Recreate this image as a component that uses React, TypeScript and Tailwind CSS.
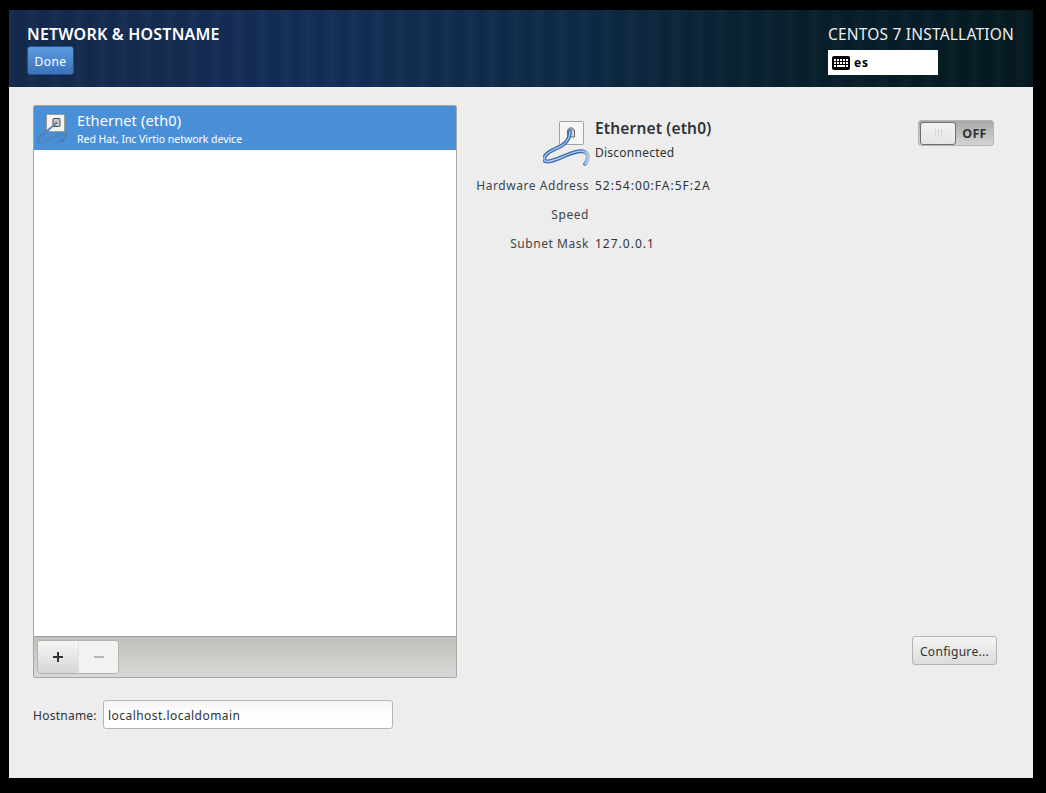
const font = "font-['Noto_Sans','Open_Sans',sans-serif]"

const smallCable = 'M22 11 C18 16 10 21 5 26 C2 29 2 32 6 31 C12 30 22 24 29 23 C32 23 32 26 29 28 C27 30 24 31 22 32'
const bigCable = 'M27 11 C27 20 22 25 12 29 C3 33 -1 38 2 41 C6 43 14 39 24 35 C31 32 38 30 42 32 C46 34 46 39 42 44'

function CableIcon({ small = false }: { small?: boolean }) {
  if (small) {
    return (
      <svg width="34" height="34" viewBox="0 0 34 34" className="shrink-0">
        <rect x="11.5" y="3.5" width="18" height="17" fill="#f4f4f2" stroke="#9a9a96" />
        <rect x="18" y="7.5" width="7" height="8" rx="1" fill="#c9c9c6" stroke="#4a4a4a" />
        <path d={smallCable} fill="none" stroke="#2f5f9f" strokeWidth="1.8" />
        <path d={smallCable} fill="none" stroke="#9dbce4" strokeWidth="0.7" />
      </svg>
    )
  }
  return (
    <svg width="48" height="48" viewBox="0 0 48 48" className="shrink-0">
      <defs>
        <linearGradient id="cableFade" x1="0" y1="0" x2="48" y2="0" gradientUnits="userSpaceOnUse">
          <stop offset="0.8" stopColor="#3a6db3" />
          <stop offset="1" stopColor="#3a6db3" stopOpacity="0.15" />
        </linearGradient>
      </defs>
      <rect x="16.5" y="1.5" width="24" height="23" rx="1" fill="#f6f6f5" stroke="#a2a2a0" />
      <path d="M24.5 17 V10 L26 10 V8 H30 V10 L31.5 10 V17 Z" fill="#d8d8d6" stroke="#6a6a68" />
      <path d={bigCable} fill="none" stroke="url(#cableFade)" strokeWidth="4" strokeLinecap="round" />
      <path d={bigCable} fill="none" stroke="#b4d0f0" strokeWidth="1.3" strokeLinecap="round" />
    </svg>
  )
}

function KeyboardIcon() {
  return (
    <svg width="18" height="14" viewBox="0 0 18 14" className="shrink-0">
      <rect width="18" height="14" rx="2" fill="#000" />
      <path d="M2 3h2v2H2zM5 3h2v2H5zM8 3h2v2H8zM11 3h2v2h-2zM14 3h2v2h-2zM2 6h2v2H2zM5 6h2v2H5zM8 6h2v2H8zM11 6h2v2h-2zM14 6h2v2h-2zM2 9h2v2H2zM5 9h8v2H5zM14 9h2v2h-2z" fill="#fff" />
    </svg>
  )
}

const details = [
  { label: 'Hardware Address', value: '52:54:00:FA:5F:2A' },
  { label: 'Speed', value: '' },
  { label: 'Subnet Mask', value: '127.0.0.1' },
]

export default function App() {
  return (
    <div className={`h-[793px] w-[1046px] overflow-hidden bg-black pl-[9px] pt-[10px] ${font}`}>
      <div className="flex h-[768px] w-[1024px] flex-col bg-[#ededed] text-[#2e3436]">
        <header className="flex h-[77px] shrink-0 justify-between bg-[repeating-linear-gradient(90deg,rgba(255,255,255,0.025)_0px,rgba(255,255,255,0)_7px,rgba(0,0,0,0.05)_13px,rgba(255,255,255,0.02)_23px),linear-gradient(90deg,#14294c_0%,#142e57_30%,#0e2a47_55%,#08202e_75%,#051920_100%)] pl-[18px] pr-[19px]">
          <div className="flex flex-col items-start pt-[15px]">
            <h1 className="text-[16px] font-semibold leading-[18px] tracking-[0.2px] text-white">NETWORK &amp; HOSTNAME</h1>
            <button className="mt-[3px] flex h-[29px] w-[47px] items-center justify-center rounded-[3px] border border-[#24508f] bg-gradient-to-b from-[#5c9be0] to-[#3a73bb] pt-[2px] text-[12px] tracking-[0.4px] text-white">
              Done
            </button>
          </div>
          <div className="flex flex-col items-start pt-[15px]">
            <div className="text-[15.5px] leading-[18px] tracking-[0.2px] text-[#eeeeee]">CENTOS 7 INSTALLATION</div>
            <div className="mt-[7px] flex h-[25px] w-[110px] items-center gap-[4px] bg-white pl-[4px] text-[12px] font-bold tracking-[0.8px] text-black">
              <KeyboardIcon />
              es
            </div>
          </div>
        </header>

        <main className="flex min-h-0 flex-1 pl-[24px] pr-[36px] pt-[18px]">
          <div className="flex w-[424px] shrink-0 flex-col">
            <div className="flex h-[573px] flex-col overflow-hidden rounded-[2px] border border-[#a6a6a3] bg-white">
              <div className="flex h-[44px] shrink-0 items-center gap-[7px] bg-[#4a90d9] pl-[1px] text-white">
                <CableIcon small />
                <div className="pl-[1px] pt-[2px]">
                  <div className="text-[14.5px] leading-[18px] tracking-[0.15px]">Ethernet (eth0)</div>
                  <div className="mt-[3px] text-[10.5px] leading-[15px] tracking-[-0.03px]">Red Hat, Inc Virtio network device</div>
                </div>
              </div>
              <div className="flex-1 bg-white" />
              <div className="flex h-[41px] shrink-0 items-center border-t border-[#9b9b98] bg-gradient-to-b from-[#c0c0bc] to-[#d8d9d6] pl-[3px]">
                <div className="flex h-[34px] w-[82px] overflow-hidden rounded-[4px] border border-[#b3b3b0]">
                  <button className="flex w-[40px] items-center justify-center bg-gradient-to-b from-[#f6f6f5] to-[#d6d6d4]">
                    <svg width="12" height="12" viewBox="0 0 12 12"><path d="M5 1h2v4h4v2H7v4H5V7H1V5h4z" fill="#2e3436" /></svg>
                  </button>
                  <button className="flex flex-1 items-center justify-center border-l border-[#e2e2e0] bg-[#f2f2f1]">
                    <svg width="12" height="12" viewBox="0 0 12 12"><path d="M1 5h10v2H1z" fill="#b4b4b2" /></svg>
                  </button>
                </div>
              </div>
            </div>
            <div className="mt-[22px] flex items-center gap-[7px]">
              <label className="w-[63px] pt-[2px] text-[12px] tracking-[0.25px] text-[#2e3436]">Hostname:</label>
              <div className="flex h-[29px] w-[290px] items-center rounded-[3px] border border-[#b5b5b2] bg-gradient-to-b from-[#f4f4f4] via-white to-white pl-[4px] pt-[2px] text-[12px] tracking-[0.45px]">
                localhost.localdomain
              </div>
            </div>
          </div>

          <div className="flex h-[560px] min-w-0 flex-1 flex-col pl-[18px]">
            <div className="flex items-start justify-between pr-[3px] pt-[15px]">
              <div>
                <div className="flex items-start gap-[4px] pl-[68px]">
                  <CableIcon />
                  <div className="-mt-[2px]">
                    <div className="text-[15.5px] font-semibold leading-[20px] tracking-[0.15px] text-[#2e3436]">Ethernet (eth0)</div>
                    <div className="mt-[7px] text-[12px] leading-[16px] tracking-[0.25px]">Disconnected</div>
                  </div>
                </div>
                <dl className="mt-[9px] grid grid-cols-[114px_auto] gap-x-[6px] gap-y-[11px] whitespace-nowrap text-[12px] leading-[18px]">
                  {details.map((d) => (
                    <div key={d.label} className="contents">
                      <dt className="text-right tracking-[0.55px] text-[#3f4446]">{d.label}</dt>
                      <dd className="tracking-[1px] text-[#2e3436]">{d.value}</dd>
                    </div>
                  ))}
                </dl>
              </div>
              <div className="flex h-[26px] w-[76px] items-center rounded-[3px] border border-[#b5b5b2] bg-gradient-to-b from-[#a9aaa8] to-[#d4d4d2] pl-[1px]">
                <div className="flex h-[23px] w-[36px] items-center justify-center rounded-[3px] border border-[#6f6f6d] bg-gradient-to-b from-[#f2f2f1] to-[#e6e6e5]">
                  <span className="h-[8px] w-[7px] border-x border-[#d5d5d3] after:mx-auto after:block after:h-full after:w-px after:bg-[#d5d5d3]" />
                </div>
                <span className="flex-1 pt-[2px] text-center text-[12.5px] font-bold tracking-[0.3px] text-[#2e3436]">OFF</span>
              </div>
            </div>
            <div className="mt-auto flex justify-end">
              <button className="flex h-[29px] w-[85px] items-center justify-center rounded-[3px] border border-[#b5b5b2] bg-gradient-to-b from-[#f4f4f3] to-[#dcdcda] pt-[2px] text-[12px] tracking-[0.3px] text-[#2e3436]">
                Configure...
              </button>
            </div>
          </div>
        </main>
      </div>
    </div>
  )
}
